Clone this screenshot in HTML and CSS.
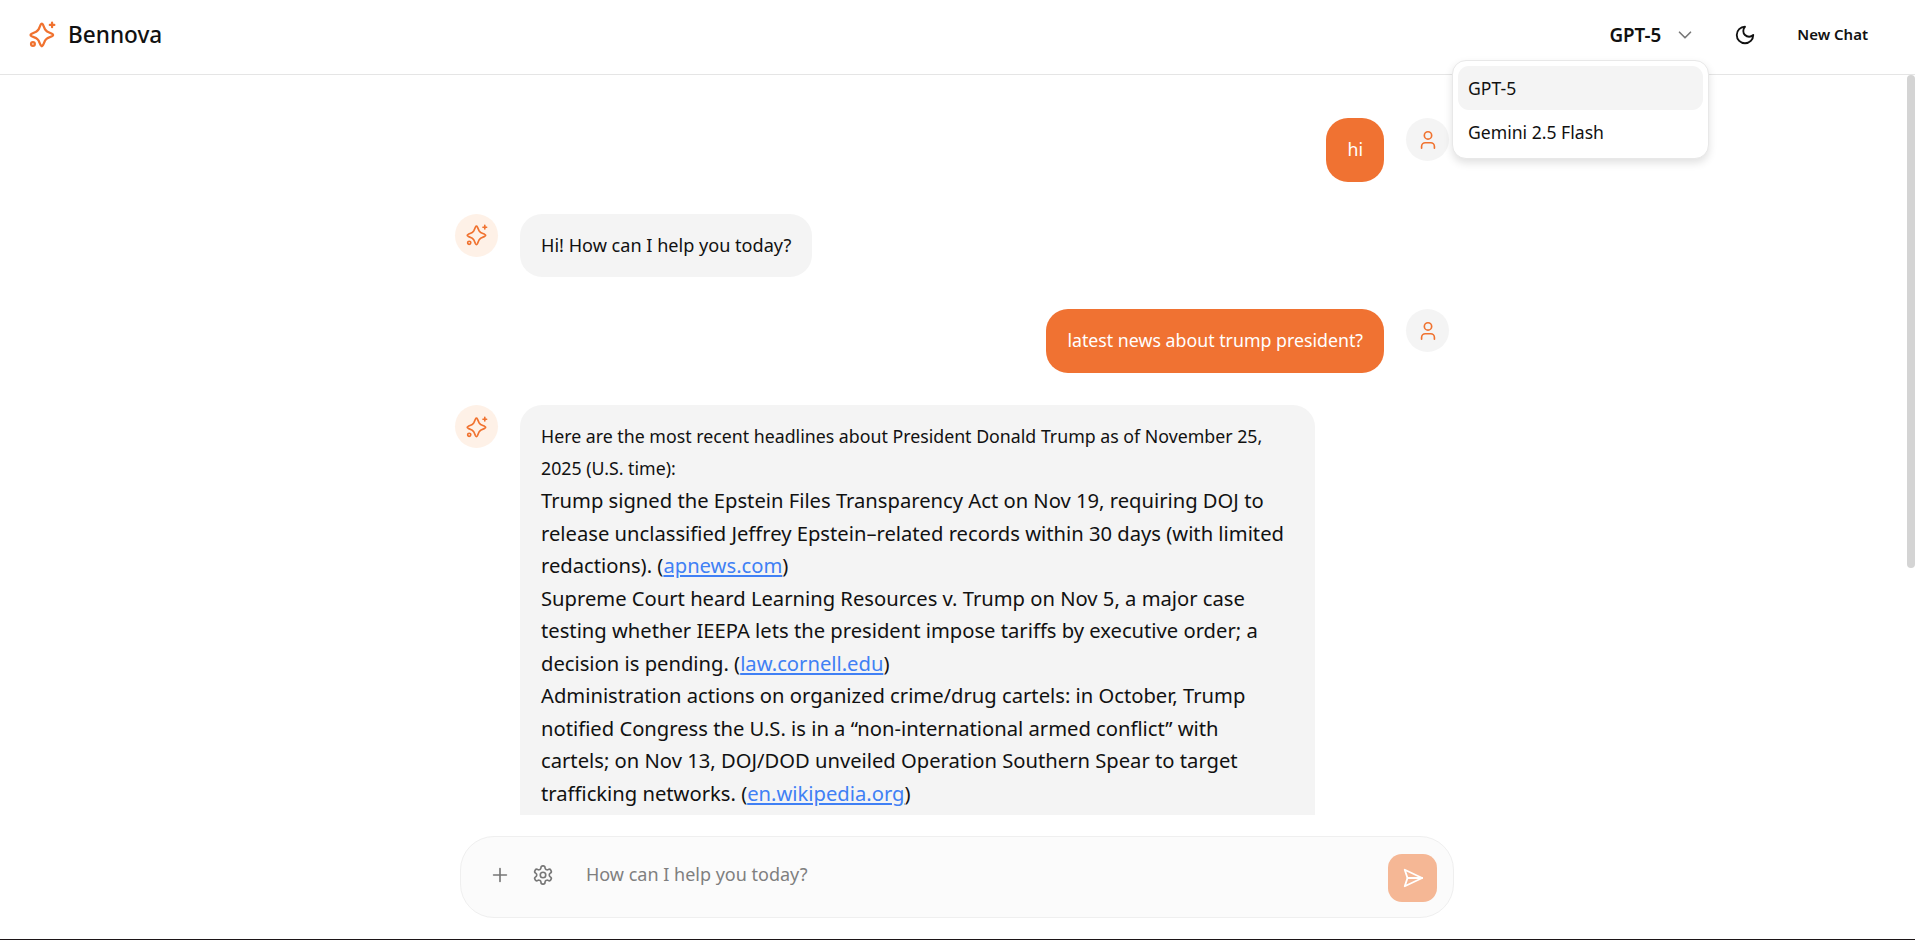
FILE: index.html
```html
<!DOCTYPE html>
<html lang="en">
  <head>
    <meta charset="UTF-8">
    <meta name="viewport" content="width=device-width, initial-scale=1.0">
    <title>Bennova</title>
    <link rel="stylesheet" href="styles.css">
  </head>
  <body>
    <div class="app">
      <!-- Top bar -->
      <header class="topbar">
        <div class="brand">
          <svg class="brand-icon" viewBox="0 0 24 24"><use href="#i-spark"></use></svg>
          <span class="brand-name">Bennova</span>
        </div>
        <div class="topbar-actions">
          <button class="model-button">
            <span>GPT-5</span>
            <svg class="chevron" viewBox="0 0 24 24"><path d="m6 9 6 6 6-6"></path></svg>
          </button>
          <button class="theme-button">
            <svg viewBox="0 0 24 24"><path d="M12 3a6 6 0 0 0 9 9 9 9 0 1 1-9-9Z"></path></svg>
          </button>
          <button class="new-chat">New Chat</button>
        </div>
        <div class="model-menu">
          <div class="model-item selected">GPT-5</div>
          <div class="model-item">Gemini 2.5 Flash</div>
        </div>
      </header>

      <!-- Chat -->
      <main class="scroller">
        <div class="thread">
          <div class="row row-user">
            <div class="bubble bubble-user">hi</div>
            <div class="avatar avatar-user"><svg viewBox="0 0 24 24"><use href="#i-user"></use></svg></div>
          </div>
          <div class="row">
            <div class="avatar avatar-ai"><svg viewBox="0 0 24 24"><use href="#i-spark"></use></svg></div>
            <div class="bubble bubble-ai">Hi! How can I help you today?</div>
          </div>
          <div class="row row-user">
            <div class="bubble bubble-user">latest news about trump president?</div>
            <div class="avatar avatar-user"><svg viewBox="0 0 24 24"><use href="#i-user"></use></svg></div>
          </div>
          <div class="row">
            <div class="avatar avatar-ai"><svg viewBox="0 0 24 24"><use href="#i-spark"></use></svg></div>
            <div class="bubble bubble-long">
              <p>Here are the most recent headlines about President Donald Trump as of November 25,<br>2025 (U.S. time):</p>
              <p class="answer">Trump signed the Epstein Files Transparency Act on Nov 19, requiring DOJ to<br>release unclassified Jeffrey Epstein–related records within 30 days (with limited<br>redactions). (<a href="#">apnews.com</a>)</p>
              <p class="answer">Supreme Court heard Learning Resources v. Trump on Nov 5, a major case<br>testing whether IEEPA lets the president impose tariffs by executive order; a<br>decision is pending. (<a href="#">law.cornell.edu</a>)</p>
              <p class="answer">Administration actions on organized crime/drug cartels: in October, Trump<br>notified Congress the U.S. is in a “non-international armed conflict” with<br>cartels; on Nov 13, DOJ/DOD unveiled Operation Southern Spear to target<br>trafficking networks. (<a href="#">en.wikipedia.org</a>)</p>
              <p class="answer">Tariff rollbacks on beef and coffee took effect after the White House revised its<br>import schedule this month. (<a href="#">apnews.com</a>)</p>
            </div>
          </div>
        </div>
      </main>

      <footer class="composer-wrap">
        <div class="composer">
          <div class="composer-tools">
            <button class="tool-button"><svg viewBox="0 0 24 24"><path d="M5 12h14M12 5v14"></path></svg></button>
            <button class="tool-button">
              <svg viewBox="0 0 24 24">
                <path d="M12.22 2h-.44a2 2 0 0 0-2 2v.18a2 2 0 0 1-1 1.73l-.43.25a2 2 0 0 1-2 0l-.15-.08a2 2 0 0 0-2.73.73l-.22.38a2 2 0 0 0 .73 2.73l.15.1a2 2 0 0 1 1 1.72v.51a2 2 0 0 1-1 1.74l-.15.09a2 2 0 0 0-.73 2.73l.22.38a2 2 0 0 0 2.73.73l.15-.08a2 2 0 0 1 2 0l.43.25a2 2 0 0 1 1 1.73V20a2 2 0 0 0 2 2h.44a2 2 0 0 0 2-2v-.18a2 2 0 0 1 1-1.73l.43-.25a2 2 0 0 1 2 0l.15.08a2 2 0 0 0 2.73-.73l.22-.39a2 2 0 0 0-.73-2.73l-.15-.08a2 2 0 0 1-1-1.74v-.5a2 2 0 0 1 1-1.74l.15-.09a2 2 0 0 0 .73-2.73l-.22-.38a2 2 0 0 0-2.73-.73l-.15.08a2 2 0 0 1-2 0l-.43-.25a2 2 0 0 1-1-1.73V4a2 2 0 0 0-2-2z"></path>
                <circle cx="12" cy="12" r="3"></circle>
              </svg>
            </button>
          </div>
          <input class="prompt" type="text" placeholder="How can I help you today?">
          <button class="send-button">
            <svg viewBox="0 0 24 24"><path d="m3 3 3 9-3 9 19-9Z"></path><path d="M6 12h16"></path></svg>
          </button>
        </div>
      </footer>

      <div class="scroll-thumb"></div>
    </div>

    <!-- Shared icons -->
    <svg class="icon-sprite">
      <symbol id="i-spark" viewBox="0 0 24 24">
        <path transform="translate(-0.6 0.4)" d="M10.9 3Q12 .9 13.1 3L14.8 6.9Q15.8 8.2 17.1 9.2L21 10.9Q23.1 12 21 13.1L17.1 14.8Q15.8 15.8 14.8 17.1L13.1 21Q12 23.1 10.9 21L9.2 17.1Q8.2 15.8 6.9 14.8L3 13.1Q.9 12 3 10.9L6.9 9.2Q8.2 8.2 9.2 6.9Z"></path>
        <path d="M20.5 1.5v4M18.5 3.5h4"></path>
        <circle cx="3.5" cy="20.5" r="1.7"></circle>
      </symbol>
      <symbol id="i-user" viewBox="0 0 24 24">
        <path d="M19 21v-2a4 4 0 0 0-4-4H9a4 4 0 0 0-4 4v2"></path>
        <circle cx="12" cy="7" r="4"></circle>
      </symbol>
    </svg>
  </body>
</html>
```

FILE: styles.css
```css
* {
  box-sizing: border-box;
}

body {
  margin: 0;
  overflow: hidden;
  font-family: "Noto Sans", "Open Sans", sans-serif;
  color: #111;
  background: #fff;
}

button {
  font-family: inherit;
  border: none;
  background: none;
  padding: 0;
  color: inherit;
  cursor: pointer;
}

svg {
  fill: none;
  stroke: currentColor;
  stroke-width: 2;
  stroke-linecap: round;
  stroke-linejoin: round;
}

.icon-sprite {
  display: none;
}

.app {
  position: relative;
  height: 100vh;
  display: flex;
  flex-direction: column;
  border-bottom: 1px solid #1c1517;
}

/* Top bar */
.topbar {
  position: relative;
  flex: none;
  height: 75px;
  display: flex;
  align-items: center;
  justify-content: space-between;
  padding: 0 47px 5px 29px;
  border-bottom: 1px solid #e5e5e5;
}

.brand {
  display: flex;
  align-items: center;
  gap: 12px;
}

.brand-icon {
  width: 27px;
  height: 27px;
  color: #f0722f;
}

.brand-name {
  font-size: 22.6px;
  font-weight: 500;
}

.topbar-actions {
  display: flex;
  align-items: center;
}

.model-button {
  display: flex;
  align-items: center;
  gap: 13px;
  font-size: 18.8px;
  font-weight: 600;
}

.chevron {
  width: 22px;
  height: 22px;
  color: #777;
  stroke-width: 1.8;
}

.theme-button {
  display: flex;
  margin-left: 38px;
}

.theme-button svg {
  width: 22px;
  height: 22px;
}

.new-chat {
  margin-left: 41px;
  margin-bottom: 1px;
  font-size: 15px;
  font-weight: 600;
}

.model-menu {
  position: absolute;
  top: 60px;
  right: 206px;
  z-index: 10;
  width: 257px;
  height: 99px;
  padding: 5px;
  background: #fff;
  border: 1px solid #e8e8e8;
  border-radius: 14px;
  box-shadow: 0 4px 8px rgba(0, 0, 0, 0.12);
}

.model-item {
  height: 44px;
  display: flex;
  align-items: center;
  padding: 0 10px;
  font-size: 17.6px;
  border-radius: 11px;
}

.model-item.selected {
  background: #f4f4f4;
}

/* Chat */
.scroller {
  flex: 1;
  min-height: 0;
  overflow: hidden;
}

.scroll-thumb {
  position: absolute;
  top: 75px;
  right: 0;
  width: 8px;
  height: 493px;
  background: #d4d4d4;
  border-radius: 4px;
}

.thread {
  width: 994px;
  margin-left: 455px;
  padding-top: 43px;
  display: flex;
  flex-direction: column;
  gap: 32px;
}

.row {
  display: flex;
  align-items: flex-start;
  gap: 22px;
}

.row-user {
  justify-content: flex-end;
}

.avatar {
  flex: none;
  width: 43px;
  height: 43px;
  border-radius: 50%;
  display: flex;
  align-items: center;
  justify-content: center;
}

.avatar svg {
  width: 22px;
  height: 22px;
  color: #f0722f;
  stroke-width: 1.8;
}

.avatar-user {
  background: #f4f4f4;
}

.avatar-ai {
  background: #fef1e7;
}

.bubble {
  padding: 16px 21px;
  font-size: 17.75px;
  line-height: 31.67px;
  background: #f4f4f4;
  border-radius: 22px;
}

.bubble-user {
  color: #fff;
  background: #f07232;
}

.bubble-ai {
  font-size: 18.1px;
}

.bubble-long {
  width: 795px;
}

.bubble p {
  margin: 0;
}

.bubble .answer {
  font-size: 20.2px;
  line-height: 32.5px;
}

.bubble a {
  color: #4080f5;
}

/* Composer */
.composer-wrap {
  flex: none;
  height: 124px;
  padding-top: 21px;
  background: #fff;
}

.composer {
  width: 994px;
  height: 82px;
  margin-left: 460px;
  display: flex;
  align-items: center;
  padding: 0 16px 0 19px;
  background: #fbfbfb;
  border: 1px solid #efefef;
  border-radius: 34px;
}

.composer-tools {
  display: flex;
  gap: 4px;
  margin-bottom: 4px;
}

.tool-button {
  width: 39px;
  height: 39px;
  display: flex;
  align-items: center;
  justify-content: center;
  color: #777;
}

.tool-button svg {
  width: 22px;
  height: 22px;
  stroke-width: 1.8;
}

.prompt {
  flex: 1;
  min-width: 0;
  margin: 0 14px 6px 24px;
  padding: 0;
  border: none;
  outline: none;
  background: none;
  font-family: inherit;
  font-size: 18px;
}

.prompt::placeholder {
  color: #7f7f7f;
  opacity: 1;
}

.send-button {
  flex: none;
  width: 49px;
  height: 48px;
  margin-top: 2px;
  display: flex;
  align-items: center;
  justify-content: center;
  color: #fff;
  background: #f5b795;
  border-radius: 14px;
}

.send-button svg {
  width: 22px;
  height: 22px;
}
```
